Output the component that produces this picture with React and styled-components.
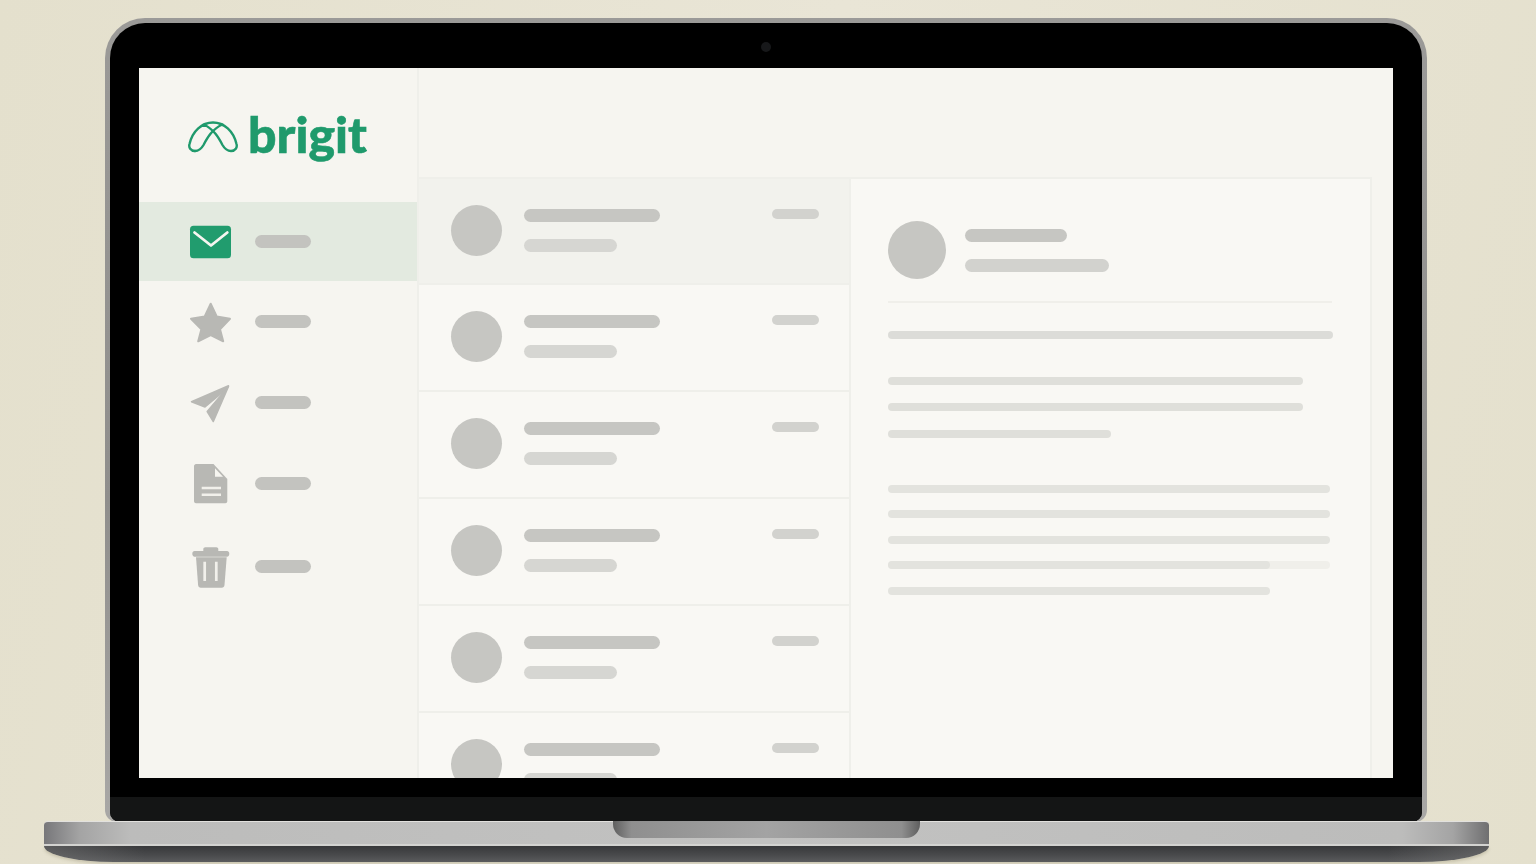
import React from 'react';
import styled, { createGlobalStyle } from 'styled-components';

const GlobalStyle = createGlobalStyle`
  html, body {
    margin: 0;
    padding: 0;
    height: 100%;
    overflow: hidden;
    background: #e8e3d3;
  }
`;

const Page = styled.div`
  width: 1536px;
  height: 864px;
  padding-top: 18px;
  box-sizing: border-box;
  background: linear-gradient(100deg, #e4e0cd 0%, #e9e5d6 50%, #e4e0cd 100%);
  overflow: hidden;
`;

const Lid = styled.div`
  width: 1322px;
  height: 804px;
  margin-left: 105px;
  box-sizing: border-box;
  padding: 5px 5px 0;
  border-radius: 40px 40px 12px 12px;
  background: linear-gradient(180deg, #9b9a98 0%, #8f8e8c 60%, #a9a8a6 100%);
`;

const Bezel = styled.div`
  height: 100%;
  box-sizing: border-box;
  display: flex;
  flex-direction: column;
  border-radius: 35px 35px 10px 10px;
  background: #000;
  padding: 45px 29px 0;
  position: relative;
`;

const Camera = styled.span`
  position: absolute;
  top: 19px;
  left: 50%;
  width: 10px;
  height: 10px;
  margin-left: -5px;
  border-radius: 50%;
  background: #17181a;
`;

const Screen = styled.div`
  height: 710px;
  flex: none;
  display: flex;
  overflow: hidden;
  background: #f6f5f0;
`;

const Chin = styled.div`
  flex: 1;
  margin: 19px -29px 0;
  background: #141515;
  border-radius: 0 0 10px 10px;
`;

const Base = styled.div`
  position: relative;
  width: 1445px;
  height: 41px;
  margin-left: 44px;
  margin-top: -1px;
  display: flex;
  flex-direction: column;
`;

const BaseTop = styled.div`
  height: 23px;
  border-top: 1px solid #e2e1de;
  border-radius: 4px 4px 0 0;
  box-sizing: border-box;
  background: linear-gradient(90deg, #77777a 0%, #a4a4a4 2.5%, #bcbcbb 6%, #c2c2c1 50%, #bcbcbb 94%, #a4a4a4 97.5%, #6f6f70 100%);
`;

const BaseEdge = styled.div`
  height: 2px;
  background: #d3d3d1;
`;

const BaseBottom = styled.div`
  flex: 1;
  border-radius: 0 0 70px 70px / 0 0 16px 16px;
  background:
    linear-gradient(90deg, rgba(125, 125, 125, 0.5) 0%, transparent 7%, transparent 93%, rgba(125, 125, 125, 0.5) 100%),
    linear-gradient(180deg, #37383a 0%, #4a4b4d 60%, #5a5b5d 100%);
  box-shadow: 0 2px 3px rgba(120, 110, 80, 0.25);
`;

const Notch = styled.div`
  position: absolute;
  top: 0;
  left: 569px;
  width: 307px;
  height: 17px;
  border-radius: 0 0 14px 14px;
  background: linear-gradient(90deg, #5f5f5f 0%, #8f8f8f 6%, #a3a3a3 50%, #8f8f8f 94%, #5f5f5f 100%);
`;

const Sidebar = styled.aside`
  width: 278px;
  flex: none;
  display: flex;
  flex-direction: column;
  border-right: 2px solid #efefea;
`;

const Brand = styled.div`
  height: 134px;
  box-sizing: border-box;
  padding: 41px 0 0 49px;
  display: flex;
  align-items: flex-start;
  gap: 10px;
`;

const LogoSvg = styled.svg`
  flex: none;
  margin-top: 12px;
`;

const BrandName = styled.span`
  font-family: 'Lato', 'Liberation Sans', sans-serif;
  font-weight: 900;
  font-size: 50px;
  line-height: 54px;
  color: #1f9a6c;
  -webkit-text-stroke: 0.6px #1f9a6c;
  margin-top: -2px;
`;

const NavItem = styled.div`
  height: ${({ $active }) => ($active ? 79 : 81)}px;
  display: flex;
  align-items: center;
  gap: 24px;
  padding-left: 51px;
  background: ${({ $active }) => ($active ? '#e3eae0' : 'transparent')};

  &:last-child {
    margin-top: 2px;
  }
`;

const NavIcon = styled.svg`
  width: 41px;
  height: 41px;
  flex: none;
  display: block;
  overflow: visible;
`;

const NavLabel = styled.span`
  width: 56px;
  height: 13px;
  border-radius: 7px;
  background: #c3c3bf;
`;

const Main = styled.main`
  flex: 1;
  min-width: 0;
  display: flex;
  flex-direction: column;
  padding-right: 21px;
`;

const TopBar = styled.div`
  height: 111px;
  box-sizing: border-box;
  flex: none;
  border-bottom: 2px solid #efefea;
`;

const Panes = styled.div`
  flex: 1;
  min-height: 0;
  display: flex;
`;

const List = styled.div`
  width: 430px;
  flex: none;
  overflow: hidden;
  border-right: 2px solid #efefea;
`;

const Row = styled.div`
  height: ${({ $active }) => ($active ? 106 : 107)}px;
  box-sizing: border-box;
  display: flex;
  align-items: flex-start;
  padding: 26px 30px 0 32px;
  border-bottom: 2px solid #efefea;
  background: ${({ $active }) => ($active ? '#f2f2ed' : '#f9f8f4')};
`;

const Avatar = styled.div`
  width: ${({ $size }) => $size}px;
  height: ${({ $size }) => $size}px;
  flex: none;
  border-radius: 50%;
  background: #c6c6c2;
`;

const RowText = styled.div`
  flex: 1;
  margin-left: 22px;
  padding-top: 4px;
  display: flex;
  flex-direction: column;
  gap: 17px;
`;

const Bar = styled.div`
  width: ${({ $w }) => $w}px;
  height: ${({ $h }) => $h}px;
  border-radius: ${({ $h }) => $h / 2}px;
  background: ${({ $c }) => $c};
`;

const RowDate = styled(Bar)`
  margin-top: 4px;
`;

const Detail = styled.section`
  flex: 1;
  min-width: 0;
  box-sizing: border-box;
  padding: 42px 37px 0;
  background: #f9f8f4;
  border-right: 2px solid #efefea;
`;

const DetailHead = styled.div`
  display: flex;
  align-items: center;
  gap: 19px;
  padding-bottom: 22px;
  border-bottom: 2px solid #f0efea;
  margin-right: 1px;
`;

const DetailTitles = styled.div`
  display: flex;
  flex-direction: column;
  gap: 17px;
`;

const Paragraph = styled.div`
  display: flex;
  flex-direction: column;
  gap: ${({ $gap }) => $gap}px;
  margin-top: ${({ $top }) => $top}px;
`;

const FadedLine = styled.div`
  position: relative;
  width: 442px;
  height: 8px;
  border-radius: 4px;
  background: #f0efea;
`;

const FadedFill = styled(Bar)`
  position: absolute;
  top: 0;
  left: 0;
`;

const LogoMark = () => (
  <LogoSvg width="50" height="32" viewBox="0 0 50 32" fill="none" stroke="#1f9a6c" strokeWidth="2.4" strokeLinecap="round" strokeLinejoin="round">
    <path d="M7 30C2.500 30 .5 26.500 1.500 23 4.500 10 14 1.500 25 1.500S45.500 10 48.500 23C49.500 26.500 47.500 30 43 30 38.500 30 36.500 27.500 34.500 24 31 17.500 26 8 15.500 3.500" />
    <path d="M34.500 3.500C24 8 19 17.500 15.500 24 13.500 27.500 11.500 30 7 30" />
  </LogoSvg>
);

const MailIcon = () => (
  <NavIcon viewBox="0 0 41 41">
    <rect x="0" y="4.700" width="41" height="32.500" rx="3.500" fill="#219c6e" />
    <path d="M4.500 11.500 21 24.500 37.300 11.500" fill="none" stroke="#f6f5f0" strokeWidth="2.800" strokeLinecap="round" strokeLinejoin="round" />
  </NavIcon>
);

const StarIcon = () => (
  <NavIcon viewBox="0 0 41 41">
    <path d="M20.700 2.700 26.700 15.500 40 17.800 30 28.300 33.200 40.300 20.700 34 8.200 40.300 11.400 28.300 1 17.800 14.700 15.500Z" fill="#b8b8b4" stroke="#b8b8b4" strokeWidth="2" strokeLinejoin="round" />
  </NavIcon>
);

const SendIcon = () => (
  <NavIcon viewBox="0 0 41 41">
    <path d="M38.500 3.800 1.500 19.700 15 25 36 7.500Z" fill="#b8b8b4" stroke="#b8b8b4" strokeWidth="1.500" strokeLinejoin="round" />
    <path d="M38.500 4.500 17.200 29.500 23.300 39.500Z" fill="#b8b8b4" stroke="#b8b8b4" strokeWidth="1.500" strokeLinejoin="round" />
  </NavIcon>
);

const DraftIcon = () => (
  <NavIcon viewBox="0 0 41 41">
    <path d="M6 1C5 1 4 2 4 3V38.300C4 39.300 5 40.300 6 40.300H35.300C36.300 40.300 37.300 39.300 37.300 38.300V16L23.500 1Z" fill="#b8b8b4" />
    <path d="M25 5.300V13.700H33Z" fill="#f6f5f0" />
    <path d="M11.700 25H31M11.700 31.700H31" stroke="#f1f0eb" strokeWidth="2.400" />
  </NavIcon>
);

const TrashIcon = () => (
  <NavIcon viewBox="0 0 41 41">
    <path d="M2.300 7.800C2.300 6 3.300 5 4.500 5H13.300V3C13.300 2 14.300 1.300 15.300 1.300H26.300C27.300 1.300 28.300 2 28.300 3V5H37C38.300 5 39.300 6 39.300 7.800S38.300 10.700 37 10.700H4.500C3.300 10.700 2.300 9.500 2.300 7.800Z" fill="#b8b8b4" />
    <path d="M6 11.300H36.700L34.500 39C34.300 40.700 33.300 41.700 31.700 41.700H10.800C9.300 41.700 8.300 40.700 8.100 39Z" fill="#b8b8b4" />
    <path d="M14.700 15.700V35M26.300 15.700V35" stroke="#f1f0eb" strokeWidth="2.700" />
  </NavIcon>
);

const navIcons = [MailIcon, StarIcon, SendIcon, DraftIcon, TrashIcon];
const rows = [0, 1, 2, 3, 4, 5];

const App = () => (
  <>
    <GlobalStyle />
    <Page>
      <Lid>
        <Bezel>
          <Camera />
          <Screen>
            <Sidebar>
              <Brand>
                <LogoMark />
                <BrandName>brigit</BrandName>
              </Brand>
              {navIcons.map((Icon, i) => (
                <NavItem key={i} $active={i === 0}>
                  <Icon />
                  <NavLabel />
                </NavItem>
              ))}
            </Sidebar>
            <Main>
              <TopBar />
              <Panes>
                <List>
                  {rows.map(i => (
                    <Row key={i} $active={i === 0}>
                      <Avatar $size={51} />
                      <RowText>
                        <Bar $w={136} $h={13} $c="#c6c6c2" />
                        <Bar $w={93} $h={13} $c="#d6d6d2" />
                      </RowText>
                      <RowDate $w={47} $h={10} $c="#d2d2ce" />
                    </Row>
                  ))}
                </List>
                <Detail>
                  <DetailHead>
                    <Avatar $size={58} />
                    <DetailTitles>
                      <Bar $w={102} $h={13} $c="#c6c6c2" />
                      <Bar $w={144} $h={13} $c="#d2d2ce" />
                    </DetailTitles>
                  </DetailHead>
                  <Paragraph $top={28} $gap={0}>
                    <Bar $w={445} $h={8} $c="#dcdcd8" />
                  </Paragraph>
                  <Paragraph $top={38} $gap={18.400}>
                    <Bar $w={415} $h={8} $c="#dfdfda" />
                    <Bar $w={415} $h={8} $c="#dfdfda" />
                    <Bar $w={223} $h={8} $c="#dfdfda" />
                  </Paragraph>
                  <Paragraph $top={47} $gap={17.500}>
                    <Bar $w={442} $h={8} $c="#e3e3de" />
                    <Bar $w={442} $h={8} $c="#e3e3de" />
                    <Bar $w={442} $h={8} $c="#e3e3de" />
                    <FadedLine>
                      <FadedFill $w={382} $h={8} $c="#e3e3de" />
                    </FadedLine>
                    <Bar $w={382} $h={8} $c="#e3e3de" />
                  </Paragraph>
                </Detail>
              </Panes>
            </Main>
          </Screen>
          <Chin />
        </Bezel>
      </Lid>
      <Base>
        <BaseTop />
        <BaseEdge />
        <BaseBottom />
        <Notch />
      </Base>
    </Page>
  </>
);

export default App;
